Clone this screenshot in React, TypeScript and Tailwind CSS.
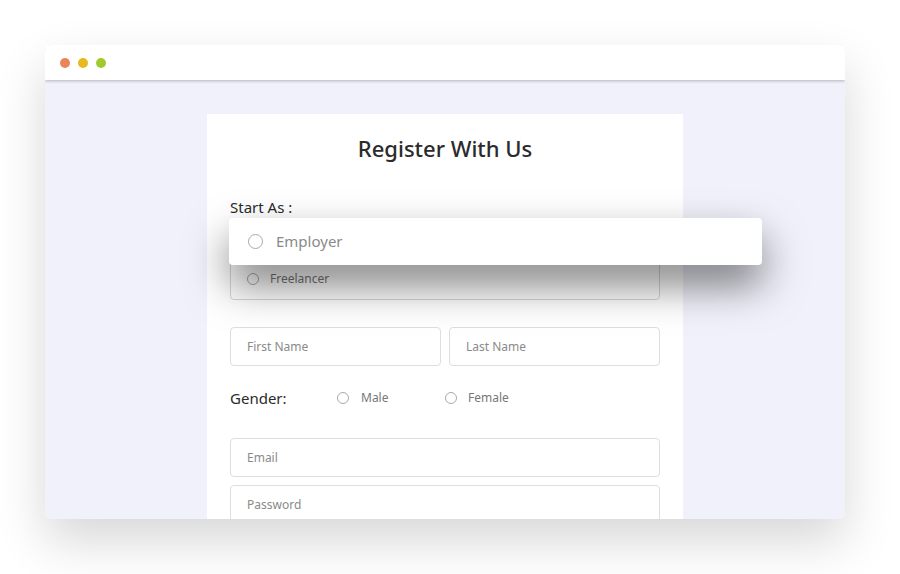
import React from 'react';

const font = { fontFamily: '"Noto Sans", "Open Sans", sans-serif' };

const Radio = ({ size = 12 }: { size?: number }) => (
    <span
        className="inline-block rounded-full border-[1.5px] border-[#a9a9a9] bg-white shrink-0"
        style={{ width: size, height: size }}
    />
);

const Field = ({ label, className = '' }: { label: string; className?: string }) => (
    <div className={`h-[39px] shrink-0 rounded-[4px] border border-[#dedede] bg-white flex items-center pl-4 text-[12px] text-[#8a8a8a] ${className}`}>
        {label}
    </div>
);

const App: React.FC = () => {
    return (
        <div className="w-[900px] h-[574px] bg-white pt-[45px] pl-[45px]" style={font}>
            <div className="w-[800px] h-[474px] rounded-[6px] overflow-hidden flex flex-col shadow-[0_22px_50px_rgba(0,0,0,0.16)]">
                {/* title bar */}
                <div className="h-[35px] shrink-0 bg-white flex items-center gap-2 pl-[15px] shadow-[0_1px_3px_rgba(0,0,0,0.25)] relative z-10">
                    <span className="w-[10px] h-[10px] rounded-full bg-[#e9855a]" />
                    <span className="w-[10px] h-[10px] rounded-full bg-[#e8b91c]" />
                    <span className="w-[10px] h-[10px] rounded-full bg-[#a0cb2c]" />
                </div>

                <div className="flex-1 min-h-0 bg-[#f0f1fa] pt-[34px] flex justify-center">
                    <div className="w-[476px] bg-white px-[23px] pt-[19px]">
                        <h1 className="text-center text-[22px] leading-[30px] font-medium text-[#2b2b2b]">Register With Us</h1>

                        <p className="mt-[34px] text-[15px] leading-[20px] text-[#2b2b2b]">Start As :</p>

                        <div className="relative mt-[3px]">
                            <div className="h-[80px] rounded-[4px] border border-[#d6d6d6] flex flex-col justify-end pb-[10px] pl-[16px]">
                                <div className="flex items-center gap-[11px] h-[20px]">
                                    <Radio size={12} />
                                    <span className="text-[12px] text-[#777]">Freelancer</span>
                                </div>
                            </div>
                            <div className="absolute left-[-1px] top-[-2px] w-[533px] h-[47px] bg-white rounded-[4px] flex items-center pl-[19px] gap-[13px] shadow-[0_20px_42px_rgba(0,0,0,0.5)]">
                                <Radio size={15} />
                                <span className="text-[15px] text-[#8a8a8a]">Employer</span>
                            </div>
                        </div>

                        <div className="mt-[27px] flex gap-2">
                            <Field label="First Name" className="flex-1" />
                            <Field label="Last Name" className="flex-1" />
                        </div>

                        <div className="mt-[20px] flex items-center h-[24px]">
                            <span className="w-[107px] text-[15px] text-[#2b2b2b]">Gender:</span>
                            <div className="flex items-center gap-[12px] w-[108px]">
                                <Radio size={12} />
                                <span className="text-[12px] text-[#777]">Male</span>
                            </div>
                            <div className="flex items-center gap-[11px]">
                                <Radio size={12} />
                                <span className="text-[12px] text-[#777]">Female</span>
                            </div>
                        </div>

                        <Field label="Email" className="mt-[28px]" />
                        <Field label="Password" className="mt-[8px]" />
                    </div>
                </div>
            </div>
        </div>
    );
};

export default App;
